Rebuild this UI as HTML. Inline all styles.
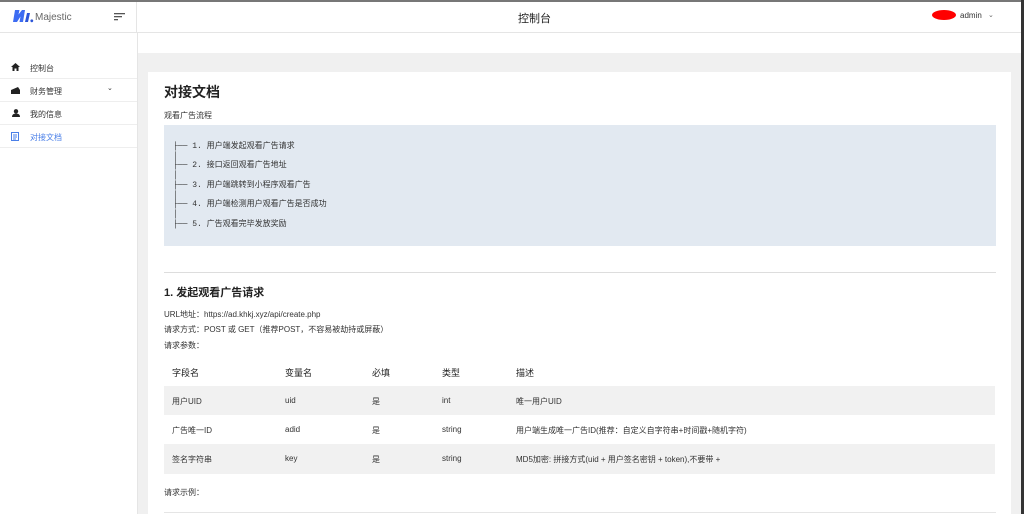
<!DOCTYPE html>
<html><head><meta charset="utf-8"><style>
*{margin:0;padding:0;box-sizing:border-box}
body{width:1024px;height:514px;overflow:hidden;background:#fff;font-family:"Liberation Sans","Noto Sans CJK SC",sans-serif;color:#333;position:relative;font-size:8px}
.top{position:absolute;left:0;top:0;width:1024px;height:2px;background:#777}
.rb{position:absolute;right:0;top:0;width:3px;height:514px;background:#333}
.hdr{position:absolute;left:0;top:2px;width:1021px;height:31px;border-bottom:1px solid #e5e5e5}
.logo{position:absolute;left:0;top:0;width:137px;height:31px;border-right:1px solid #e5e5e5}
.side{position:absolute;left:0;top:33px;width:138px;height:481px;border-right:1px solid #e5e5e5}
.item{position:absolute;left:0;width:137px;height:23px;border-bottom:1px solid #eee;font-size:8px;color:#333}
.item span{position:absolute;left:30px;top:7px}
.main{position:absolute;left:138px;top:53px;width:883px;height:461px;background:#f0f0f0}
.card{position:absolute;left:148px;top:72px;width:863px;height:442px;background:#fff}
.t{position:absolute;white-space:nowrap}
.flow{position:absolute;left:164px;top:125px;width:832px;height:121px;background:#e2e9f1}
.flow div{position:absolute;left:9px;font-family:"Liberation Mono","Noto Sans CJK SC",monospace;font-size:8px;color:#333;white-space:pre;line-height:10px}
.row{position:absolute;left:164px;width:831px}
.row span{position:absolute;top:0}
</style></head><body>
<div class="top"></div>
<div class="hdr">
 <div class="logo">
  <svg style="position:absolute;left:12px;top:7px" width="22" height="14" viewBox="0 0 22 14"><path d="M1 13 L3 1 L7.5 1 L6.5 5.5 L10 1 L13 1 L11 13 L7.5 13 L8.5 7.5 L5 13 Z" fill="#3d6cf2"/><path d="M13 13 L15 4 L18 4 L16 13 Z" fill="#2c55d8"/><circle cx="19.8" cy="11.8" r="1.4" fill="#2c55d8"/></svg>
  <div class="t" style="left:35px;top:10px;font-size:10px;color:#666">Majestic</div>
  <svg style="position:absolute;left:114px;top:11px" width="11" height="8"><rect x="0" y="0" width="11" height="1.3" fill="#555"/><rect x="0" y="3" width="8" height="1.3" fill="#555"/><rect x="0" y="6" width="4" height="1.3" fill="#555"/></svg>
 </div>
 <div class="t" style="left:518px;top:8px;font-size:11px;color:#222">控制台</div>
 <div style="position:absolute;left:932px;top:8px;width:24px;height:10px;background:#f00;border-radius:50%"></div>
 <div class="t" style="left:960px;top:9px;font-size:8px;color:#333">admin</div>
 <div class="t" style="left:988px;top:9px;font-size:7px;color:#666">⌄</div>
</div>
<div class="side">
 <div class="item" style="top:23px"><svg style="position:absolute;left:11px;top:7px" width="9" height="8"><path d="M4.5 0 L9 4 L7.5 4 L7.5 8 L5.5 8 L5.5 5.5 L3.5 5.5 L3.5 8 L1.5 8 L1.5 4 L0 4Z" fill="#222"/></svg><span>控制台</span></div>
 <div class="item" style="top:46px"><svg style="position:absolute;left:11px;top:8px" width="9" height="7"><path d="M0 3 L7 0 L9 3 L9 7 L0 7Z" fill="#222"/></svg><span>财务管理</span><span style="left:107px;top:5px;font-size:7px">⌄</span></div>
 <div class="item" style="top:69px"><svg style="position:absolute;left:12px;top:7px" width="8" height="8"><circle cx="4" cy="2.3" r="2.2" fill="#222"/><path d="M0 8 Q0 4.5 4 4.5 Q8 4.5 8 8Z" fill="#222"/></svg><span>我的信息</span></div>
 <div class="item" style="top:92px;color:#4a7fe8"><svg style="position:absolute;left:11px;top:7px" width="8" height="9"><rect x="0.5" y="0.5" width="7" height="8" fill="none" stroke="#4a7fe8"/><path d="M2 3h4M2 5h4M2 7h3" stroke="#4a7fe8"/></svg><span>对接文档</span></div>
</div>
<div class="main"></div>
<div class="card"></div>
<div class="t" style="left:164px;top:82px;font-size:14px;font-weight:bold;color:#222">对接文档</div>
<div class="t" style="left:164px;top:110px;font-size:8px">观看广告流程</div>
<div class="flow">
 <div style="top:17px">├── 1. 用户端发起观看广告请求</div>
 <div style="top:27px">│</div>
 <div style="top:36px">├── 2. 接口返回观看广告地址</div>
 <div style="top:46px">│</div>
 <div style="top:56px">├── 3. 用户端跳转到小程序观看广告</div>
 <div style="top:66px">│</div>
 <div style="top:75px">├── 4. 用户端检测用户观看广告是否成功</div>
 <div style="top:85px">│</div>
 <div style="top:95px">├── 5. 广告观看完毕发放奖励</div>
</div>
<div style="position:absolute;left:164px;top:272px;width:832px;height:1px;background:#ddd"></div>
<div class="t" style="left:164px;top:284px;font-size:11px;font-weight:bold;color:#222">1. 发起观看广告请求</div>
<div class="t" style="left:164px;top:309px;font-size:8px">URL地址：https://ad.khkj.xyz/api/create.php</div>
<div class="t" style="left:164px;top:324px;font-size:8px">请求方式：POST 或 GET（推荐POST，不容易被劫持或屏蔽）</div>
<div class="t" style="left:164px;top:340px;font-size:8px">请求参数：</div>
<div class="row" style="top:363px;height:23px;font-size:9px;color:#222"><span style="left:8px;top:3px">字段名</span><span style="left:121px;top:3px">变量名</span><span style="left:208px;top:3px">必填</span><span style="left:278px;top:3px">类型</span><span style="left:352px;top:3px">描述</span></div>
<div class="row" style="top:386px;height:29px;background:#f1f1f1;font-size:8px"><span style="left:8px;top:10px">用户UID</span><span style="left:121px;top:10px">uid</span><span style="left:208px;top:10px">是</span><span style="left:278px;top:10px">int</span><span style="left:352px;top:10px">唯一用户UID</span></div>
<div class="row" style="top:415px;height:29px;font-size:8px"><span style="left:8px;top:10px">广告唯一ID</span><span style="left:121px;top:10px">adid</span><span style="left:208px;top:10px">是</span><span style="left:278px;top:10px">string</span><span style="left:352px;top:10px">用户端生成唯一广告ID(推荐：自定义自字符串+时间戳+随机字符)</span></div>
<div class="row" style="top:444px;height:30px;background:#f1f1f1;font-size:8px"><span style="left:8px;top:10px">签名字符串</span><span style="left:121px;top:10px">key</span><span style="left:208px;top:10px">是</span><span style="left:278px;top:10px">string</span><span style="left:352px;top:10px">MD5加密: 拼接方式(uid + 用户签名密钥 + token),不要带 +</span></div>
<div class="t" style="left:164px;top:487px;font-size:8px">请求示例：</div>
<div style="position:absolute;left:164px;top:512px;width:832px;height:1px;background:#e5e5e5"></div>
<div class="rb"></div>
</body></html>
